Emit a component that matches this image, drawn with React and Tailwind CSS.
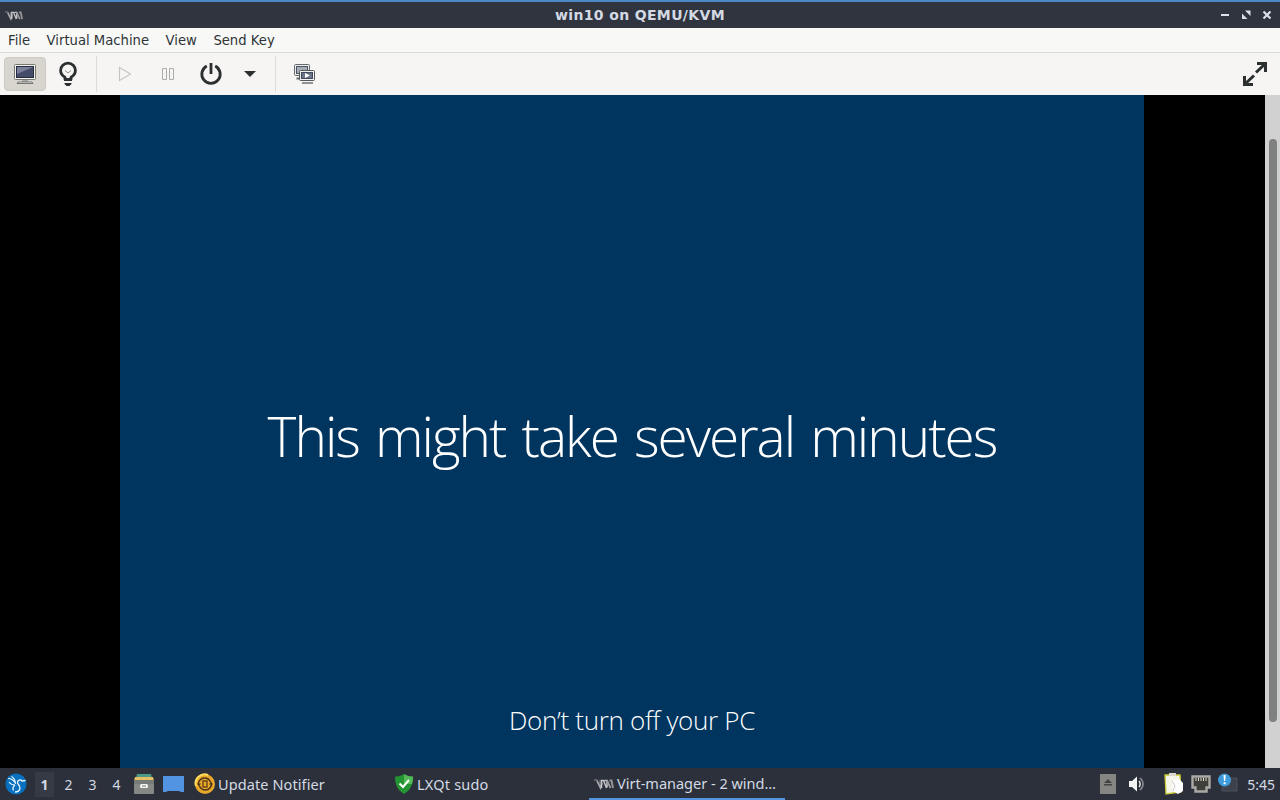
import React from "react";

const VmLogo = ({ className }) => (
  <svg viewBox="0 0 20 12" className={className} fill="none">
    <path d="M0 2h3l3 7V2" stroke="#6f7176" strokeWidth="1.400" />
    <path d="M3 3l3.500 7L8 5" stroke="#a9a9ab" strokeWidth="1.600" />
    <path d="M7.500 10V2.500h2l3 7.500M10.500 2.500h2.500v7" stroke="#c4c4c6" strokeWidth="1.500" />
    <path d="M13 2.500l3.500 7.500M15.500 2.500h2L19 10" stroke="#98989b" strokeWidth="1.900" />
  </svg>
);

const TitleBar = () => (
  <div className="relative flex h-7 shrink-0 items-center justify-between border-t-2 border-[#4b88c8] bg-[#2f343f] px-[5px]">
    <VmLogo className="h-[11px] w-[18px]" />
    <span className="absolute inset-x-0 top-[4px] text-center text-[14px] leading-[18px] font-bold tracking-[.35px] text-[#d3dae3]">
      win10 on QEMU/KVM
    </span>
    <svg width="56" height="12" viewBox="0 0 56 12" fill="none">
      <path d="M2 6h8" stroke="#d8e0ea" strokeWidth="2" />
      <path d="M26 1.500h5.500V7zM23 4.500V10h5.500z" fill="#d8e0ea" />
      <path d="M44.500 2.500l7 7M51.500 2.500l-7 7" stroke="#d8e0ea" strokeWidth="2.200" />
    </svg>
  </div>
);

const MenuBar = () => (
  <div className="flex h-[25px] shrink-0 items-center gap-[16.5px] border-b border-[#dcdad7] bg-[#f8f8f7] px-2 pt-[2px] text-[13.2px] text-[#2e3436]">
    <span>File</span>
    <span>Virtual Machine</span>
    <span>View</span>
    <span>Send Key</span>
  </div>
);

const MonitorIcon = () => (
  <svg width="24" height="22" viewBox="0 0 24 22">
    <rect x="1.500" y="1.500" width="21" height="15" rx="1" fill="#f3f3f0" stroke="#77776f" />
    <rect x="3.500" y="3.500" width="17" height="11" fill="#454c68" stroke="#272b40" />
    <path d="M4 4h16L4 11z" fill="#7b819b" />
    <path d="M9 17h6v2H9z" fill="#aaa" />
    <path d="M5 19h14l1 1.500H4z" fill="#eee" stroke="#5c5d5b" strokeWidth=".8" />
  </svg>
);

const BulbIcon = () => (
  <svg width="22" height="26" viewBox="0 0 22 26" fill="none">
    <path d="M8 18.500v-2.200C5.300 14.700 3.600 12.700 3.600 9.500a7.400 7.400 0 0 1 14.800 0c0 3.200-1.700 5.200-4.400 6.800v2.200z" stroke="#2c2f30" strokeWidth="2.800" strokeLinejoin="round" />
    <path d="M8 9.500l3 2.500 3-2.500" stroke="#8b8d8d" strokeWidth="1" />
    <path d="M7 18h8v2H7zM7.500 22h7v1l-2 2h-3l-2-2z" fill="#2c2f30" />
  </svg>
);

const ScreensIcon = () => (
  <svg width="22" height="22" viewBox="0 0 22 22">
    <rect x="1.500" y="1.500" width="15" height="11" rx="1" fill="#ecefef" stroke="#666a6b" />
    <rect x="3.500" y="3.500" width="11" height="7" fill="#a5adb7" stroke="#4c5361" />
    <path d="M3.500 15.500h3" stroke="#666a6b" strokeWidth="2" />
    <rect x="6.500" y="7.500" width="15" height="10" rx="1" fill="#f0f2f2" stroke="#555a5d" />
    <rect x="8.500" y="9.500" width="11" height="6" fill="#68758a" stroke="#424a5a" />
    <path d="M12 10l5 2.500-5 2.500z" fill="#fff" />
    <path d="M9 20h11" stroke="#777b7c" strokeWidth="1.600" />
  </svg>
);

const Toolbar = () => (
  <div className="flex h-[42px] shrink-0 items-center bg-[#f6f5f4] pl-1">
    <div className="flex h-[34px] w-[42px] items-center justify-center rounded border border-[#cdc9c3] bg-[#d8d4ce]">
      <MonitorIcon />
    </div>
    <div className="ml-[11px]">
      <BulbIcon />
    </div>
    <div className="ml-[17px] h-9 w-px bg-[#dedbd8]" />
    <svg width="16" height="18" viewBox="0 0 16 18" fill="none" className="ml-[20px]">
      <path d="M2.500 2.500v13l11-6.500z" stroke="#c3c4c4" strokeWidth="1.100" />
    </svg>
    <svg width="16" height="16" viewBox="0 0 16 16" fill="none" className="ml-[27px]">
      <path d="M2.500 2.500h4v11h-4zM9.500 2.500h4v11h-4z" stroke="#aaabab" />
    </svg>
    <svg width="24" height="24" viewBox="0 0 24 24" fill="none" className="ml-[23px]">
      <path d="M7.800 4a9.200 9.200 0 1 0 8.400 0M12 1v11" stroke="#2c2f30" strokeWidth="2.800" />
    </svg>
    <svg width="12" height="6" viewBox="0 0 12 6" className="ml-[21px]">
      <path d="M0 0h12L6 6z" fill="#2c2f30" />
    </svg>
    <div className="ml-[19px] h-9 w-px bg-[#dedbd8]" />
    <div className="ml-[17px]">
      <ScreensIcon />
    </div>
    <svg width="26" height="26" viewBox="0 0 26 26" fill="none" stroke="#2c2f30" strokeWidth="3" className="mr-3 ml-auto">
      <path d="M15 2.500h8.500V11M23 3l-9 8.500M2.500 15v8.500H11M3 23l9-8.500" />
    </svg>
  </div>
);

const GuestDisplay = () => (
  <div className="flex min-h-0 flex-1 bg-black">
    <div className="ml-[120px] flex w-[1024px] flex-col items-center bg-[#00355f] font-['Open_Sans','Noto_Sans',sans-serif] text-white">
      <p className="mt-[303px] text-[55px] leading-[76px] font-light tracking-[-2px] whitespace-nowrap [word-spacing:3.75px]">
        This might take several minutes
      </p>
      <p className="mt-[229px] text-[26px] leading-[34px] font-light tracking-[-.3px] whitespace-nowrap">
        Don’t turn off your PC
      </p>
    </div>
    <div className="ml-auto w-[15px] bg-[#d2d1d2] pt-11 pl-1">
      <div className="h-[583px] w-2 rounded-full bg-[#7f8080]" />
    </div>
  </div>
);

const workspaces = ["2", "3", "4"];

const Taskbar = () => (
  <div className="flex h-8 shrink-0 items-center bg-[#2c303b] pl-[5px] font-['Noto_Sans',sans-serif] text-[14px] text-[#d3dae3]">
    <svg width="22" height="22" viewBox="0 0 22 22" fill="none">
      <circle cx="11" cy="11" r="10.500" fill="#0871bf" />
      <path d="M3 5.500c3 0 6 2 7.500 5M4 9c1.500 2 3.500 3 6 3M6.500 3.500c2.500 1.500 4 4 4 7.500" stroke="#eaf6ff" strokeWidth="1.100" />
      <path d="M20.500 7.500L17 8c-1.500-2-4.500-1-4.500 1.500 0 2 3 3 2.500 6-.5 2-2.500 3.500-5 3.500M10 12c-2 1.500-2.500 3.500-1.500 5.500" stroke="#eaf6ff" strokeWidth="1.300" />
    </svg>
    <div className="ml-2 flex h-[25px] w-[19px] items-center justify-center bg-[#363a45] font-bold">1</div>
    {workspaces.map((n) => (
      <div key={n} className="ml-[5px] w-[19px] text-center">{n}</div>
    ))}
    <svg width="22" height="22" viewBox="0 0 22 22" className="ml-[7px]">
      <path d="M4 1h14l1 4H3z" fill="#4c9b86" />
      <path d="M2 4h18l1 4H1z" fill="#e6bf65" />
      <path d="M1 7h20v13a1 1 0 0 1-1 1H2a1 1 0 0 1-1-1z" fill="#858985" />
      <path d="M1 7h20v4H1z" fill="#777b77" />
      <rect x="7" y="11" width="8" height="4" rx="1.500" fill="#f4f4f2" />
      <path d="M9 13h4" stroke="#777" />
    </svg>
    <svg width="21" height="18" viewBox="0 0 21 18" className="ml-[8px]">
      <path d="M0 1h21v16h-3l-2-1H5l-2 1H0z" fill="#5294e2" />
    </svg>
    <div className="ml-2.5 flex w-[200px] items-center text-[14.5px] tracking-[.1px]">
      <svg width="22" height="22" viewBox="0 0 22 22" fill="none">
        <circle cx="11" cy="11" r="10" fill="#e9a92b" />
        <path d="M2 13a9 9 0 0 1 12-11" stroke="#ffdc5c" strokeWidth="2" />
        <path d="M4.500 12c-.5-4 2.500-7 6-7 3 0 5 1.500 6 4M17.500 10c.5 4-2.500 7-6 7-3 0-5-1.500-6-4" stroke="#4d3418" strokeWidth="1.500" />
        <path d="M3 10.500h4l-2 3zM15 11.500h4l-2-3z" fill="#4d3418" />
        <path d="M9 8h4v6H9z" stroke="#6b4513" strokeWidth="1.400" />
      </svg>
      <span className="ml-[2px] pt-px">Update Notifier</span>
    </div>
    <div className="flex w-[195px] items-center text-[14.5px] tracking-[.2px]">
      <svg width="20" height="22" viewBox="0 0 20 22" fill="none">
        <path d="M10 1c3 2 6 2.500 9 2.500 0 9-3 14-9 17.500C4 17.500 1 12.500 1 3.500 4 3.500 7 3 10 1z" fill="#249331" />
        <path d="M10 1c3 2 6 2.500 9 2.500 0 3-.3 5-1 7.500H10z" fill="#53b855" />
        <path d="M5.500 10.500l3.500 3.500 6-7" stroke="#fff" strokeWidth="2" />
      </svg>
      <span className="ml-[3px] pt-px">LXQt sudo</span>
    </div>
    <div className="flex h-[30px] w-[196px] items-center self-end border-b-2 border-[#5294e2] pb-[1px] pl-[5px] text-[14.5px]">
      <VmLogo className="h-3 w-5" />
      <span className="ml-[3px] pt-px">Virt-manager - 2 wind…</span>
    </div>
    <div className="ml-auto flex items-center pr-[5px]">
      <svg width="16" height="20" viewBox="0 0 16 20">
        <path d="M0 0h16v20H0z" fill="#858684" />
        <path d="M4 9l4-4 4 4zM4 10h8v1.500H4z" fill="#444543" />
      </svg>
      <svg width="18" height="18" viewBox="0 0 18 18" fill="none" className="ml-3">
        <path d="M1 6h3l5-4.500v15L4 12H1z" fill="#f3f3f3" />
        <path d="M11 6c1.500 1.500 1.500 4.500 0 6" stroke="#e8e8e8" strokeWidth="1.500" />
        <path d="M12 3c4 3 4 9 0 12" stroke="#8b8e95" strokeWidth="1.500" />
      </svg>
      <svg width="22" height="22" viewBox="0 0 22 22" className="ml-[17px]">
        <path d="M2 2h15l1 17-15 2z" fill="#f6f5ea" stroke="#c8cb35" strokeWidth="1.300" />
        <path d="M6 0h7v3H6z" fill="#d8d8ce" />
        <path d="M9 8l7-2 4 4v8l-5 3-5-3z" fill="#fff" />
        <path d="M9 8l3 5-2 5" fill="none" stroke="#c9c9c5" />
      </svg>
      <svg width="20" height="18" viewBox="0 0 20 18" className="ml-[6px]">
        <path d="M1.500 1.500h17v11h-3v4h-11v-4h-3z" fill="#3e3e3a" stroke="#aaa9a6" strokeWidth="2.400" />
        <path d="M5 3v3M7.500 3v3M10 3v3M12.500 3v3M15 3v3" stroke="#dedbc7" />
      </svg>
      <svg width="20" height="20" viewBox="0 0 20 20" className="ml-[7px] mb-[2px]">
        <path d="M11 5h8v13H4v-4h7z" fill="#3d414b" stroke="#4d515a" />
        <circle cx="6.500" cy="7" r="6.500" fill="#3e9bdc" />
        <path d="M5.500 2h2.200l-.4 6H6zM5.600 9.200h2v2h-2z" fill="#fff" />
      </svg>
      <span className="ml-[9px]">5:45</span>
    </div>
  </div>
);

const App = () => {
  return (
    <div className="flex h-screen w-full flex-col overflow-hidden font-['DejaVu_Sans',sans-serif]">
      <TitleBar />
      <MenuBar />
      <Toolbar />
      <GuestDisplay />
      <Taskbar />
    </div>
  );
};

export default App;
